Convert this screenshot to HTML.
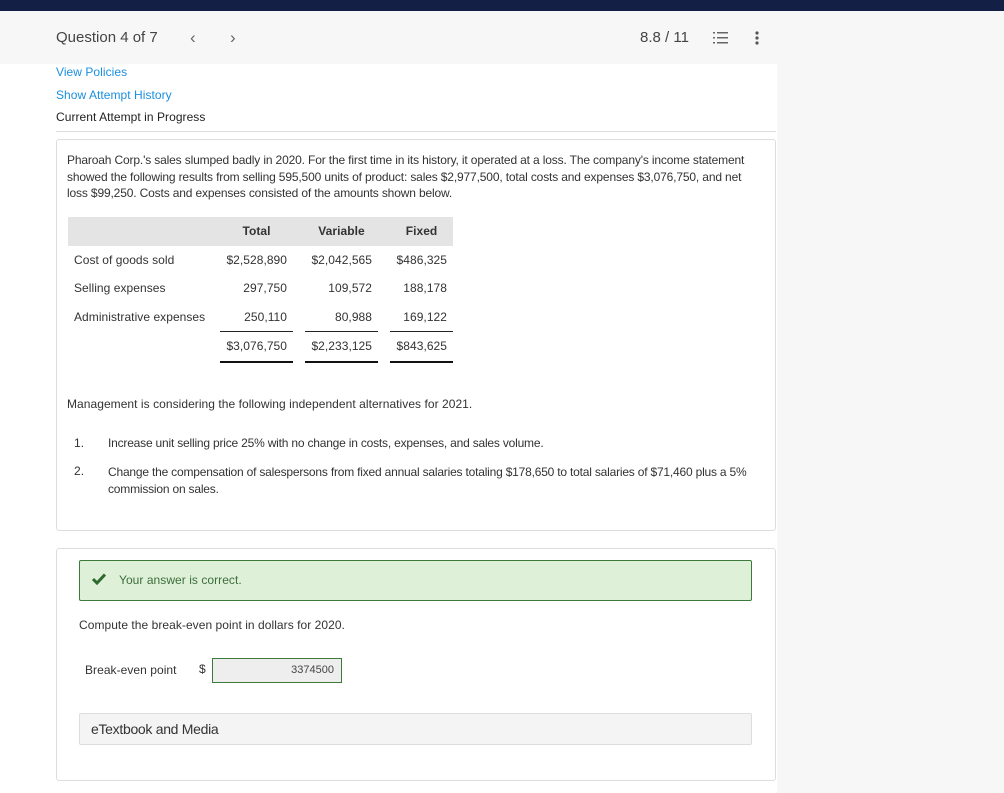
<!DOCTYPE html>
<html><head><meta charset="utf-8"><style>
*{margin:0;padding:0;box-sizing:border-box}
body{width:1004px;height:793px;background:#f7f7f7;font-family:"Liberation Sans",sans-serif;color:#333;position:relative;overflow:hidden}
.a{position:absolute;white-space:nowrap}
.t{font-size:12px;letter-spacing:0.05px}
.card{position:absolute;background:#fff;border:1px solid #ddd;border-radius:3px}
.r{text-align:right}
</style></head><body>
<div class="a" style="left:0;top:0;width:1004px;height:11px;background:#131f45"></div>
<div class="a" style="left:0;top:64px;width:777px;height:729px;background:#fff"></div>
<div class="a" style="left:56px;top:29px;font-size:15px;color:#444">Question 4 of 7</div>
<div class="a" style="left:190px;top:28px;font-size:17px;color:#666">&#8249;</div>
<div class="a" style="left:230px;top:28px;font-size:17px;color:#666">&#8250;</div>
<div class="a" style="left:640px;top:29px;font-size:15px;color:#444">8.8 / 11</div>
<svg class="a" style="left:713px;top:31px" width="16" height="14"><g fill="#666"><rect x="4" y="1" width="11" height="1.5"/><rect x="4" y="6" width="11" height="1.5"/><rect x="4" y="11" width="11" height="1.5"/><rect x="0" y="1" width="2" height="1.5"/><rect x="0" y="6" width="2" height="1.5"/><rect x="0" y="11" width="2" height="1.5"/></g></svg>
<svg class="a" style="left:755px;top:31px" width="4" height="14"><g fill="#555"><circle cx="2" cy="2" r="1.6"/><circle cx="2" cy="7" r="1.6"/><circle cx="2" cy="12" r="1.6"/></g></svg>
<div class="a t" style="left:56px;top:65px;color:#1a8fe0">View Policies</div>
<div class="a t" style="left:56px;top:88px;color:#1a8fe0">Show Attempt History</div>
<div class="a t" style="left:56px;top:110px;color:#222">Current Attempt in Progress</div>
<div class="a" style="left:56px;top:131px;width:720px;height:1px;background:#ddd"></div>

<div class="card" style="left:56px;top:139px;width:720px;height:392px"></div>
<div class="a t" style="left:67px;top:152px;line-height:16.5px;color:#333;letter-spacing:-0.15px">Pharoah Corp.'s sales slumped badly in 2020. For the first time in its history, it operated at a loss. The company's income statement<br>showed the following results from selling 595,500 units of product: sales $2,977,500, total costs and expenses $3,076,750, and net<br>loss $99,250. Costs and expenses consisted of the amounts shown below.</div>
<div class="a" style="left:68px;top:217px;width:385px;height:29px;background:#e4e4e4"></div>
<div class="a t" style="left:220px;top:224px;width:73px;text-align:center;font-weight:bold">Total</div>
<div class="a t" style="left:305px;top:224px;width:73px;text-align:center;font-weight:bold">Variable</div>
<div class="a t" style="left:390px;top:224px;width:63px;text-align:center;font-weight:bold">Fixed</div>
<div class="a t" style="left:74px;top:253px">Cost of goods sold</div>
<div class="a t" style="left:74px;top:281px">Selling expenses</div>
<div class="a t" style="left:74px;top:310px">Administrative expenses</div>
<div class="a t r" style="left:190px;width:97px;top:253px">$2,528,890</div>
<div class="a t r" style="left:275px;width:97px;top:253px">$2,042,565</div>
<div class="a t r" style="left:350px;width:97px;top:253px">$486,325</div>
<div class="a t r" style="left:190px;width:97px;top:281px">297,750</div>
<div class="a t r" style="left:275px;width:97px;top:281px">109,572</div>
<div class="a t r" style="left:350px;width:97px;top:281px">188,178</div>
<div class="a t r" style="left:190px;width:97px;top:310px">250,110</div>
<div class="a t r" style="left:275px;width:97px;top:310px">80,988</div>
<div class="a t r" style="left:350px;width:97px;top:310px">169,122</div>
<div class="a" style="left:220px;top:331px;width:73px;height:1px;background:#222"></div>
<div class="a" style="left:305px;top:331px;width:73px;height:1px;background:#222"></div>
<div class="a" style="left:390px;top:331px;width:63px;height:1px;background:#222"></div>
<div class="a t r" style="left:190px;width:97px;top:339px">$3,076,750</div>
<div class="a t r" style="left:275px;width:97px;top:339px">$2,233,125</div>
<div class="a t r" style="left:350px;width:97px;top:339px">$843,625</div>
<div class="a" style="left:220px;top:361px;width:73px;height:2px;background:#111"></div>
<div class="a" style="left:305px;top:361px;width:73px;height:2px;background:#111"></div>
<div class="a" style="left:390px;top:361px;width:63px;height:2px;background:#111"></div>
<div class="a t" style="left:67px;top:397px">Management is considering the following independent alternatives for 2021.</div>
<div class="a t" style="left:74px;top:436px">1.</div>
<div class="a t" style="left:108px;top:436px;letter-spacing:-0.2px">Increase unit selling price 25% with no change in costs, expenses, and sales volume.</div>
<div class="a t" style="left:74px;top:464px">2.</div>
<div class="a t" style="left:108px;top:464px;line-height:17px;letter-spacing:-0.2px">Change the compensation of salespersons from fixed annual salaries totaling $178,650 to total salaries of $71,460 plus a 5%<br>commission on sales.</div>

<div class="card" style="left:56px;top:548px;width:720px;height:233px"></div>
<div class="a" style="left:79px;top:560px;width:673px;height:41px;background:#dff0d8;border:1px solid #3c7a3c;border-radius:2px"></div>
<svg class="a" style="left:92px;top:573px" width="14" height="12"><path d="M1 6 L5 10 L13 1.5" stroke="#2e6b2e" stroke-width="3" fill="none"/></svg>
<div class="a t" style="left:119px;top:573px;color:#3c6e3c">Your answer is correct.</div>
<div class="a t" style="left:79px;top:618px">Compute the break-even point in dollars for 2020.</div>
<div class="a t" style="left:85px;top:663px">Break-even point</div>
<div class="a t" style="left:199px;top:662px">$</div>
<div class="a" style="left:212px;top:658px;width:130px;height:25px;background:#eee;border:1px solid #3c7a3c"></div>
<div class="a r" style="left:212px;top:664px;width:122px;font-size:11px;color:#444">3374500</div>
<div class="a" style="left:79px;top:713px;width:673px;height:32px;background:#f4f4f4;border:1px solid #ddd;border-radius:2px"></div>
<div class="a" style="left:91px;top:721px;font-size:14px;color:#333;letter-spacing:-0.3px">eTextbook and Media</div>
</body></html>
